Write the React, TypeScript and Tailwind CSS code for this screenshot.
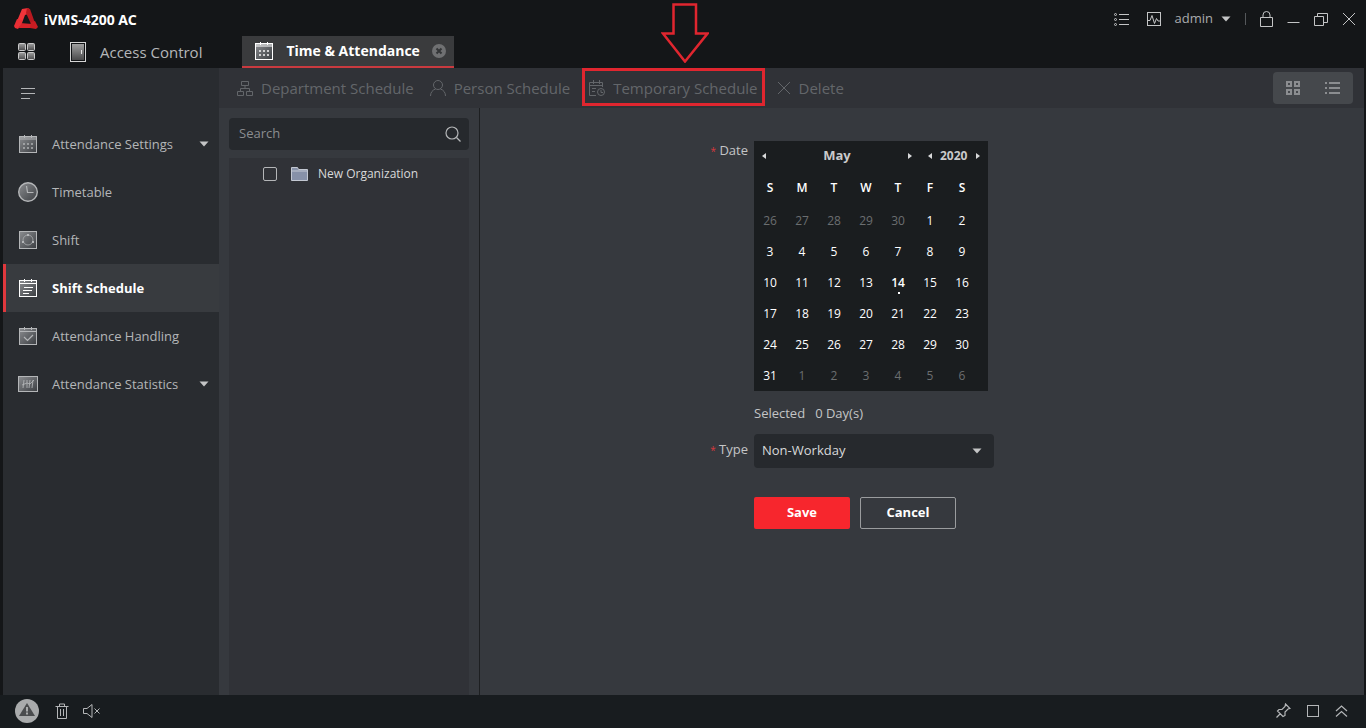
import type { ReactNode } from "react";
import clsx from "clsx";

type IconProps = { className?: string };

// shared metal gradient of the menu icons
function Defs() {
  return (
    <svg width="0" height="0" className="absolute" aria-hidden="true">
      <defs>
        <linearGradient id="metal" x1="0" y1="0" x2="1" y2="1">
          <stop offset="0" stopColor="#8b8d90" />
          <stop offset="1" stopColor="#3b3e42" />
        </linearGradient>
        <linearGradient id="tile" x1="0" y1="0" x2="0" y2="1">
          <stop offset="0" stopColor="#a0a0a0" />
          <stop offset="1" stopColor="#4a4a4b" />
        </linearGradient>
      </defs>
    </svg>
  );
}

function Logo() {
  return (
    <svg width="24" height="22" viewBox="0 0 24 22">
      <path d="M8 1l6-1 2 2-2 4-3 1-3 8-5-2z" fill="#f0343a" />
      <path d="M13 0l3 1 5 14-1 3-3-2-5-11z" fill="#b8191f" />
      <path d="M6 15l12 1-1 4-12 0z" fill="#d62329" />
      <path d="M0 18l3-7 5 1 0 3-4 6-3-1z" fill="#e92e34" />
      <path d="M17 14l4-1 3 6-2 2-6-1z" fill="#c81c22" />
    </svg>
  );
}

function TilesIcon() {
  return (
    <svg width="18" height="18" viewBox="0 0 18 18" fill="url(#tile)" stroke="#c9c9c9">
      <rect x="0.5" y="0.5" width="7" height="7" rx="1" />
      <rect x="9.5" y="0.5" width="7" height="7" rx="1" />
      <rect x="0.5" y="9.5" width="7" height="7" rx="1" />
      <rect x="9.5" y="9.5" width="7" height="7" rx="1" />
    </svg>
  );
}

function DoorIcon() {
  return (
    <svg width="16" height="20" viewBox="0 0 16 20">
      <rect x="0.5" y="0.5" width="15" height="19" fill="#111315" stroke="#d5d5d5" />
      <rect x="2" y="2" width="12" height="16" fill="url(#tile)" />
      <path d="M11.5 8v4" stroke="#e5e5e5" />
    </svg>
  );
}

function CalendarIcon({ className }: IconProps) {
  return (
    <svg width="20" height="20" viewBox="0 0 20 20" className={className}>
      <rect x="1.5" y="2.5" width="17" height="16" fill="url(#metal)" stroke="currentColor" />
      <path d="M2 4.5h16" stroke="currentColor" strokeOpacity="0.5" strokeWidth="3" />
      <path d="M6.5 1v3M13.5 1v3" stroke="currentColor" />
      <path d="M5 9h2v2H5zM9 9h2v2H9zM13 9h2v2h-2zM5 13h2v2H5zM9 13h2v2H9zM13 13h2v2h-2z" fill="currentColor" fillOpacity="0.7" />
    </svg>
  );
}

function ClockIcon() {
  return (
    <svg width="20" height="20" viewBox="0 0 20 20" fill="none" stroke="currentColor">
      <circle cx="10" cy="10" r="9.3" fill="url(#metal)" strokeWidth="1.4" />
      <path d="M8.5 4l1 6.5h6" strokeWidth="1.2" />
    </svg>
  );
}

function ShiftIcon() {
  return (
    <svg width="20" height="20" viewBox="0 0 20 20" fill="none" stroke="currentColor">
      <rect x="1.5" y="1.5" width="17" height="17" fill="url(#metal)" />
      <circle cx="10" cy="10" r="5" strokeOpacity="0.7" />
      <path d="M9 4h2v2H9zM4 11h2v2H4zM14 11h2v2h-2z" fill="currentColor" stroke="none" />
    </svg>
  );
}

function ScheduleIcon() {
  return (
    <svg width="20" height="20" viewBox="0 0 20 20" fill="none" stroke="currentColor">
      <rect x="1.5" y="2.5" width="17" height="16" fill="url(#metal)" />
      <path d="M6.5 1v3M13.5 1v3M2 5.5h16M6 9.5h9M5 12.5h9M5 15.5h6" />
    </svg>
  );
}

function HandlingIcon() {
  return (
    <svg width="20" height="20" viewBox="0 0 20 20" fill="none" stroke="currentColor">
      <rect x="1.5" y="2.5" width="17" height="16" fill="url(#metal)" />
      <path d="M6.5 1v3M13.5 1v3M2 5.5h16" />
      <path d="M6 11l3.5 3.5L15 9" strokeWidth="1.2" />
    </svg>
  );
}

function StatisticsIcon() {
  return (
    <svg width="20" height="20" viewBox="0 0 20 20" fill="none" stroke="currentColor">
      <rect x="0.5" y="2.5" width="19" height="15" fill="url(#metal)" />
      <path d="M5 14l1-8M9 14V6M11 14l1-8M14 14l1-8M4 11l5-2 3 1 4-4" strokeOpacity="0.85" />
    </svg>
  );
}

function Caret({ className }: IconProps) {
  return (
    <svg width="10" height="6" viewBox="0 0 10 6" className={className}>
      <path d="M0.5 0.5h9L5 5.5z" fill="currentColor" />
    </svg>
  );
}

function DepartmentIcon() {
  return (
    <svg width="16" height="16" viewBox="0 0 16 16" fill="none" stroke="currentColor">
      <path d="M4.5 1.5h7v4h-7zM0.5 11.5h6v4h-6zM9.5 11.5h6v4h-6zM8 6v2.5M3.5 11V8.5h9V11" />
    </svg>
  );
}

function PersonIcon() {
  return (
    <svg width="16" height="16" viewBox="0 0 16 16" fill="none" stroke="currentColor">
      <circle cx="8" cy="5" r="4.5" />
      <path d="M0.5 16c0-3.5 2-6 5-7M15.5 16c0-3.5-2-6-5-7" />
    </svg>
  );
}

function TemporaryIcon() {
  return (
    <svg width="16" height="16" viewBox="0 0 16 16" fill="none" stroke="currentColor">
      <path d="M7 15.5H0.5v-13h13V7M0.5 5.5h13M4.5 0v4M10.5 0v4M3 8.5h4M3 11.5h3" />
      <circle cx="12" cy="12" r="3.5" />
      <path d="M12 10v2.5h2" />
    </svg>
  );
}

function CrossIcon({ className }: IconProps) {
  return (
    <svg width="14" height="14" viewBox="0 0 14 14" fill="none" stroke="currentColor" className={className}>
      <path d="M1 1l12 12M13 1L1 13" />
    </svg>
  );
}

function HintArrow() {
  return (
    <svg width="48" height="60" viewBox="0 0 48 60" className="absolute bottom-full left-19 mb-2" aria-hidden="true">
      <path d="M12.5 1.5h22.5v29h11.5L24 58.5 2 30.5h10.5z" fill="none" stroke="#e0262f" strokeWidth="2.5" />
    </svg>
  );
}

function TitleBar() {
  return (
    <div className="flex h-9 items-center justify-between pt-0.5 pr-2.5 pl-3.5">
      <div className="flex items-center gap-1.5">
        <Logo />
        <h1 className="pt-0.5 font-['Noto_Sans',sans-serif] text-sm font-bold text-white">iVMS-4200 AC</h1>
      </div>
      <div className="flex items-center text-[#c4c5c6]">
        <button aria-label="Task list" className="mr-4.5">
          <svg width="15" height="14" viewBox="0 0 15 14" fill="none" stroke="currentColor">
            <path d="M5 2.5h10M5 7.5h10M5 12.5h10" />
            <circle cx="1.5" cy="2.5" r="1" />
            <circle cx="1.5" cy="7.5" r="1" />
            <circle cx="1.5" cy="12.5" r="1" />
          </svg>
        </button>
        <button aria-label="Monitor" className="mr-3.5">
          <svg width="14" height="14" viewBox="0 0 14 14" fill="none" stroke="currentColor">
            <rect x="0.5" y="0.5" width="13" height="13" />
            <path d="M1 8.5h2l2-5 2.5 8 2-5 1.5 2.5h2" />
          </svg>
        </button>
        <button className="flex items-center gap-2 text-[13px] text-[#a9abad]">
          admin
          <Caret className="text-[#c4c5c6]" />
        </button>
        <span className="mx-3.5 h-3 w-px bg-[#55585b]" />
        <button aria-label="Lock" className="mr-3.5">
          <svg width="13" height="16" viewBox="0 0 13 16" fill="none" stroke="currentColor">
            <path d="M0.5 6.5h12v9h-12zM3 6.5V4a3.5 3.5 0 0 1 7 0v2.5" />
          </svg>
        </button>
        <button aria-label="Minimize" className="mr-3.5">
          <svg width="13" height="14" viewBox="0 0 13 14" stroke="currentColor">
            <path d="M0.5 10.5h12" />
          </svg>
        </button>
        <button aria-label="Restore" className="mr-3.5">
          <svg width="14" height="14" viewBox="0 0 14 14" fill="none" stroke="currentColor">
            <path d="M0.5 4.5h9v9h-9zM3.5 4V1.5h10v9H10" />
          </svg>
        </button>
        <button aria-label="Close">
          <CrossIcon />
        </button>
      </div>
    </div>
  );
}

function TabBar() {
  return (
    <nav className="flex h-8 items-center pl-4.5">
      <button aria-label="Modules" className="mr-8.5">
        <TilesIcon />
      </button>
      <button className="mr-10 flex items-center gap-3.5 text-[15px] leading-5 text-[#b4b6b8]">
        <DoorIcon />
        Access Control
      </button>
      <div className="flex h-8 items-center border-b-2 border-[#c93a3f] bg-[#3a3b3d] pr-2 pl-3">
        <button className="flex items-center gap-3 text-sm font-bold text-white">
          <CalendarIcon />
          Time &amp; Attendance
        </button>
        <button aria-label="Close tab" className="ml-3">
          <svg width="14" height="14" viewBox="0 0 14 14">
            <circle cx="7" cy="7" r="7" fill="#6f7072" />
            <path d="M4.5 4.5l5 5M9.5 4.5l-5 5" stroke="#333537" strokeWidth="2" />
          </svg>
        </button>
      </div>
    </nav>
  );
}

const menu = [
  { label: "Attendance Settings", icon: <CalendarIcon />, sub: true },
  { label: "Timetable", icon: <ClockIcon /> },
  { label: "Shift", icon: <ShiftIcon /> },
  { label: "Shift Schedule", icon: <ScheduleIcon />, active: true },
  { label: "Attendance Handling", icon: <HandlingIcon /> },
  { label: "Attendance Statistics", icon: <StatisticsIcon />, sub: true },
];

function Sidebar() {
  return (
    <aside className="w-54 shrink-0 bg-[#292c30]">
      <button aria-label="Collapse menu" className="flex h-13 items-center pl-4.5 text-[#b4b6b8]">
        <svg width="14" height="12" viewBox="0 0 14 12" stroke="currentColor">
          <path d="M0 0.5h14M0 5.5h14M0 10.5h9" />
        </svg>
      </button>
      <ul>
        {menu.map((item) => (
          <li key={item.label}>
            <button
              className={clsx(
                "flex h-12 w-full items-center gap-3.5 border-l-3 pr-2.5 pl-3 text-[13px] leading-4",
                item.active
                  ? "border-[#e0383d] bg-[#383b3f] font-bold text-white"
                  : "border-transparent text-[#b4b6b8]"
              )}
            >
              {item.icon}
              {item.label}
              {item.sub && <Caret className="ml-auto text-[#c4c5c6]" />}
            </button>
          </li>
        ))}
      </ul>
    </aside>
  );
}

function ToolButton({ icon, children }: { icon: ReactNode; children: ReactNode }) {
  return (
    <button className="flex items-center gap-2">
      {icon}
      {children}
    </button>
  );
}

function Toolbar() {
  return (
    <div className="flex h-10 items-center justify-between bg-[#303237] pr-2.75 pl-4.5 text-[15px] leading-5 text-[#63666a]">
      <div className="flex items-center">
        <ToolButton icon={<DepartmentIcon />}>Department Schedule</ToolButton>
        <div className="mr-3 ml-4">
          <ToolButton icon={<PersonIcon />}>Person Schedule</ToolButton>
        </div>
        <div className="relative mr-3 mb-0.5 flex h-9.5 items-center border-3 border-[#e0262f] px-1 pt-0.5">
          <ToolButton icon={<TemporaryIcon />}>Temporary Schedule</ToolButton>
          <HintArrow />
        </div>
        <ToolButton icon={<CrossIcon />}>Delete</ToolButton>
      </div>
      <div className="flex h-8 w-20 items-center justify-around rounded bg-[#45484c] text-[#8b8d90]">
        <button aria-label="Grid view">
          <svg width="14" height="14" viewBox="0 0 14 14" fill="none" stroke="currentColor" strokeWidth="2">
            <path d="M1 1h4v4H1zM9 1h4v4H9zM1 9h4v4H1zM9 9h4v4H9z" />
          </svg>
        </button>
        <button aria-label="List view">
          <svg width="15" height="12" viewBox="0 0 15 12" stroke="currentColor" strokeWidth="2">
            <path d="M4 1h11M4 6h11M4 11h11M0 1h2M0 6h2M0 11h2" />
          </svg>
        </button>
      </div>
    </div>
  );
}

function OrgPanel() {
  return (
    <section className="flex w-65 shrink-0 flex-col px-2.5 pt-2.5">
      <div className="flex h-8 items-center rounded-sm bg-[#26292d] pr-2 pl-2.5">
        <input
          type="search"
          aria-label="Search"
          placeholder="Search"
          className="min-w-0 flex-1 bg-transparent text-[13px] outline-none placeholder:text-[#8b8d90]"
        />
        <svg width="16" height="16" viewBox="0 0 16 16" fill="none" stroke="#b4b6b8" strokeWidth="1.2">
          <circle cx="7" cy="7" r="6" />
          <path d="M11.5 11.5L15.5 15.5" />
        </svg>
      </div>
      <div className="mt-2 flex-1 bg-[#303237] pt-2 pl-8.5">
        <label className="flex items-center text-xs text-[#d8d9da]">
          <input type="checkbox" className="mr-3.5 size-3.5 appearance-none rounded-xs border border-[#b4b6b8]" />
          <svg width="17" height="14" viewBox="0 0 17 14" className="mr-2.5">
            <path d="M0.5 13.5V0.5h6l1 2h9v11z" fill="#8791a8" stroke="#c3c8d2" />
            <path d="M1 4h15" stroke="#c3c8d2" />
          </svg>
          New Organization
        </label>
      </div>
    </section>
  );
}

// May 2020, padded with the days of the months around it
const weeks = Array.from({ length: 6 }, (_, w) =>
  Array.from({ length: 7 }, (_, d) => {
    const n = w * 7 + d - 4;
    if (n < 1) return { day: n + 30, muted: true };
    if (n > 31) return { day: n - 31, muted: true };
    return { day: n, muted: false };
  })
);

function MonthArrow({ label, right }: { label: string; right?: boolean }) {
  return (
    <button aria-label={label}>
      <svg width="4" height="6" viewBox="0 0 4 6">
        <path d={right ? "M0 0l4 3-4 3z" : "M4 0L0 3l4 3z"} fill="#d8d9da" />
      </svg>
    </button>
  );
}

function Calendar() {
  return (
    <div className="w-58.5 bg-[#1a1d1f] text-[13px] text-[#c9cacb]">
      <div className="flex h-8 items-center px-2 pb-0.5 font-bold">
        <MonthArrow label="Previous month" />
        <span className="flex-1 text-center">May</span>
        <MonthArrow label="Next month" right />
        <div className="ml-4 flex items-center gap-2 text-xs">
          <MonthArrow label="Previous year" />
          <span className="w-7">2020</span>
          <MonthArrow label="Next year" right />
        </div>
      </div>
      <table className="w-56 table-fixed text-center text-xs text-white">
        <thead>
          <tr className="h-8">
            {["S", "M", "T", "W", "T", "F", "S"].map((d, i) => (
              <th key={i} className="pb-0.5 font-semibold">{d}</th>
            ))}
          </tr>
        </thead>
        <tbody>
          {weeks.map((week, w) => (
            <tr key={w} className="h-7.75">
              {week.map(({ day, muted }) => (
                <td key={day} className={clsx("relative p-0", muted && "text-[#6b6e70]")}>
                  {!muted && day === 14 ? (
                    <>
                      <b className="font-semibold">14</b>
                      <span className="absolute bottom-1 left-1/2 size-0.5 bg-white" />
                    </>
                  ) : (
                    day
                  )}
                </td>
              ))}
            </tr>
          ))}
        </tbody>
      </table>
    </div>
  );
}

function ScheduleForm() {
  return (
    <form
      onSubmit={(e) => e.preventDefault()}
      className="grid flex-1 grid-cols-[268px_240px] content-start gap-x-1.5 border-l border-[#1d1f21] pt-8.25 text-[13px] text-[#c4c5c6]"
    >
      <span className="text-right leading-4.5">
        <span className="text-[10px] text-[#d8383d]">*</span> Date
      </span>
      <div>
        <Calendar />
        <p className="mt-3.5 mb-3.25 flex gap-2.5 leading-4">
          <span>Selected</span>
          <span>0 Day(s)</span>
        </p>
      </div>
      <label htmlFor="type" className="pt-1.5 text-right leading-4.5">
        <span className="text-[10px] text-[#d8383d]">*</span> Type
      </label>
      <div className="relative">
        <select id="type" className="h-8.5 w-full appearance-none rounded-sm bg-[#26292d] px-2 text-[#d8d9da]">
          <option>Non-Workday</option>
        </select>
        <Caret className="pointer-events-none absolute top-3.5 right-3" />
      </div>
      <div className="col-start-2 mt-7.25 flex gap-2.5 font-bold text-white">
        <button type="submit" className="h-8 w-24 rounded-xs bg-[#f7262d]">
          Save
        </button>
        <button type="button" className="h-8 w-24 rounded-xs border border-[#9a9c9e]">
          Cancel
        </button>
      </div>
    </form>
  );
}

function StatusBar() {
  return (
    <footer className="flex h-8.25 items-center justify-between bg-[#181c1f] pr-4.5 pb-0.5 pl-3.75 text-[#b4b6b8]">
      <div className="flex items-center">
        <button aria-label="Alarms" className="mr-4">
          <svg width="24" height="24" viewBox="0 0 24 24">
            <circle cx="12" cy="12" r="12" fill="#a9abac" />
            <path d="M12 4l8 13H4z" fill="#4a4c4e" />
            <path d="M12 8v4.5M12 13.5v2" stroke="#a9abac" strokeWidth="2" />
          </svg>
        </button>
        <button aria-label="Clear" className="mr-3.5">
          <svg width="14" height="16" viewBox="0 0 14 16" fill="none" stroke="currentColor">
            <path d="M0.5 3.5h13M4.5 3V1h5v2M2.5 4v11.5h9V4M5.5 6v7M8.5 6v7" />
          </svg>
        </button>
        <button aria-label="Muted">
          <svg width="18" height="14" viewBox="0 0 18 14" fill="none" stroke="currentColor">
            <path d="M0.5 4.5h3.5l5-4v13l-5-4H0.5zM11.5 4.5l5 5M16.5 4.5l-5 5" />
          </svg>
        </button>
      </div>
      <div className="flex items-center gap-4">
        <button aria-label="Pin">
          <svg width="15" height="15" viewBox="0 0 15 15" fill="none" stroke="currentColor">
            <path d="M9.5 1l4.5 4.5-2 0.5-3 3v3.5L7 13.5 1.5 8 3 6.5h3l3-3zM4.5 10.5L0.5 14.5" strokeWidth="1.2" />
          </svg>
        </button>
        <button aria-label="Window">
          <svg width="12" height="12" viewBox="0 0 12 12" fill="none" stroke="currentColor">
            <rect x="0.5" y="0.5" width="11" height="11" />
          </svg>
        </button>
        <button aria-label="Expand">
          <svg width="13" height="12" viewBox="0 0 13 12" fill="none" stroke="currentColor" strokeWidth="1.2">
            <path d="M1 6l5.5-5L12 6M1 11.5l5.5-5 5.5 5" />
          </svg>
        </button>
      </div>
    </footer>
  );
}

export default function App() {
  return (
    <div className="flex min-h-screen flex-col bg-[#141618] font-['Open_Sans','Noto_Sans',sans-serif]">
      <Defs />
      <header>
        <TitleBar />
        <TabBar />
      </header>
      <div className="mr-0.5 ml-[3px] flex flex-1">
        <Sidebar />
        <main className="flex min-w-0 flex-1 flex-col bg-[#36393e]">
          <Toolbar />
          <div className="flex flex-1">
            <OrgPanel />
            <ScheduleForm />
          </div>
        </main>
      </div>
      <StatusBar />
    </div>
  );
}
